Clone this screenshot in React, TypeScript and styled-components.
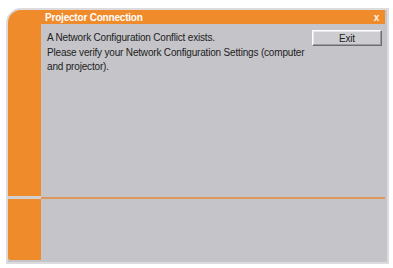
import React from "react";
import styled, { createGlobalStyle } from "styled-components";

const Global = createGlobalStyle`
  html, body { margin: 0; padding: 0; background: #ffffff; }
  body { font-family: "Liberation Sans", Arial, sans-serif; }
`;

const ORANGE = "#f08b2c";
const GRAY = "#c4c4c9";

const Window = styled.div`
  margin: 8px 0 0 6px;
  width: 379px;
  height: 252px;
  border: 2px solid #dcdcdf;
  border-radius: 15px 0 0 0;
  background: ${GRAY};
  display: flex;
  flex-direction: column;
  overflow: hidden;
`;

const TitleBar = styled.div`
  height: 14px;
  flex: none;
  background: ${ORANGE};
  display: flex;
  align-items: center;
  padding: 0 6px 0 37px;
  margin-right: 2px;
  color: #ffffff;
  font-size: 10px;
  font-weight: bold;
  letter-spacing: -0.2px;
`;

const Title = styled.span`
  flex: 1;
`;

const Close = styled.span`
  font-size: 10px;
  font-weight: bold;
  color: #fff3e6;
`;

const Section = styled.div<{ $h: number }>`
  height: ${(p) => p.$h}px;
  flex: none;
  display: flex;
`;

const Side = styled.div<{ $bottomGap?: number; $round?: boolean }>`
  width: 33px;
  flex: none;
  background: ${ORANGE};
  margin-bottom: ${(p) => p.$bottomGap ?? 0}px;
  border-radius: ${(p) => (p.$round ? "0 0 0 3px" : "0")};
`;

const Panel = styled.div`
  flex: 1;
  display: flex;
  align-items: flex-start;
  padding: 6px 5px 0 6px;
  background: ${GRAY};
`;

const Message = styled.div`
  flex: 1;
  padding-top: 1px;
  font-size: 10px;
  line-height: 14.5px;
  color: #222222;
  letter-spacing: -0.18px;
`;

const ExitButton = styled.button`
  width: 70px;
  height: 16px;
  flex: none;
  padding: 0;
  background: #cdcdd1;
  border: 1px solid;
  border-color: #ffffff #6d6d72 #6d6d72 #ffffff;
  box-shadow: inset -1px -1px 0 #9a9a9f, inset 1px 1px 0 #e8e8ea;
  font-family: "Liberation Sans", Arial, sans-serif;
  font-size: 10px;
  color: #222;
  letter-spacing: -0.2px;
`;

const Divider = styled.div`
  height: 3px;
  flex: none;
  display: flex;
`;

const DividerGap = styled.div`
  width: 33px;
  background: #d0d0d4;
`;

const DividerLine = styled.div`
  flex: 1;
  margin-top: 1px;
  height: 2px;
  background: #e0975a;
  margin-right: 2px;
`;

export default function App() {
  return (
    <>
      <Global />
      <Window>
        <TitleBar>
          <Title>Projector Connection</Title>
          <Close>x</Close>
        </TitleBar>
        <Section $h={172}>
          <Side />
          <Panel>
            <Message>
              A Network Configuration Conflict exists.
              <br />
              Please verify your Network Configuration Settings (computer
              <br />
              and projector).
            </Message>
            <ExitButton>Exit</ExitButton>
          </Panel>
        </Section>
        <Divider>
          <DividerGap />
          <DividerLine />
        </Divider>
        <Section $h={63}>
          <Side $bottomGap={2} $round />
          <Panel />
        </Section>
      </Window>
    </>
  );
}
